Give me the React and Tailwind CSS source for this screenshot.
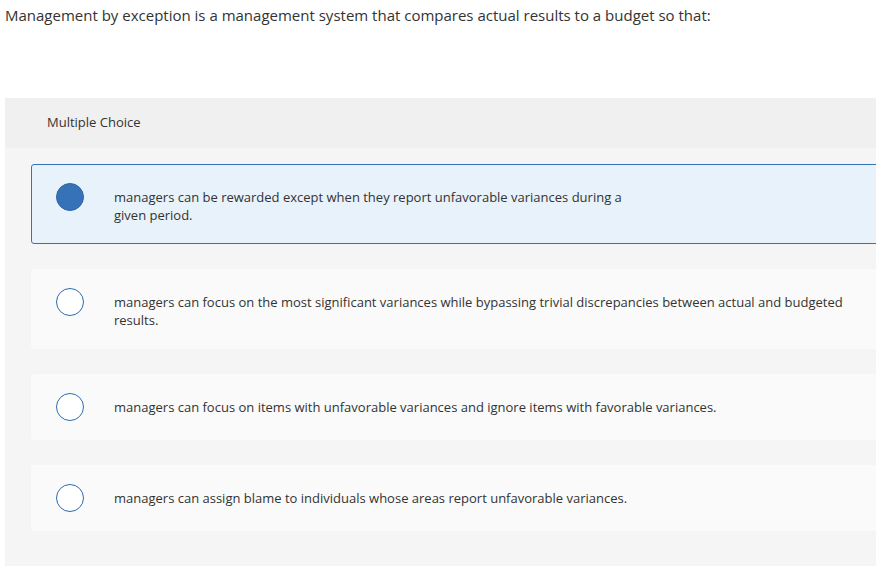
import React, { useState } from 'react';

const options = [
  ['managers can be rewarded except when they report unfavorable variances during a', 'given period.'],
  ['managers can focus on the most significant variances while bypassing trivial discrepancies between actual and budgeted results.'],
  ['managers can focus on items with unfavorable variances and ignore items with favorable variances.'],
  ['managers can assign blame to individuals whose areas report unfavorable variances.'],
];

export default function App() {
  const [selected, setSelected] = useState(0);

  return (
    <div className="w-[876px] h-[566px] overflow-hidden bg-white text-[#333]" style={{ fontFamily: '"Open Sans", "Lato", sans-serif' }}>
      <p className="px-[5px] pt-[5px] text-[15px] leading-[20px] text-[#333]">
        Management by exception is a management system that compares actual results to a budget so that:
      </p>

      <div className="mt-[73px] ml-[5px] w-[900px] h-[500px] bg-[#f5f5f5]">
        <div className="h-[50px] bg-[#f0f0f0] pl-[42px] flex items-center text-[13px]">
          Multiple Choice
        </div>

        <div className="pl-[26px] pt-[16px] flex flex-col gap-[25px]">
          {options.map((lines, i) => {
            const isSel = selected === i;
            return (
              <div
                key={i}
                onClick={() => setSelected(i)}
                className={`flex items-start pl-[24px] py-[18px] rounded-[3px] border cursor-pointer ${
                  isSel ? 'bg-[#e8f2fb] border-[#3572b8]' : 'bg-[#fafafa] border-transparent'
                }`}
              >
                <span
                  className={`shrink-0 w-[28px] h-[28px] rounded-full border ${
                    isSel ? 'bg-[#3572b8] border-[#2f66a6]' : 'bg-white border-[#2d6cb0]'
                  }`}
                />
                <div className="ml-[30px] pt-[5px] pb-[1px] text-[13px] leading-[18px] w-[748px]">
                  {lines.map((l, j) => (
                    <React.Fragment key={j}>
                      {j > 0 && <br />}
                      {l}
                    </React.Fragment>
                  ))}
                </div>
              </div>
            );
          })}
        </div>
      </div>
    </div>
  );
}
